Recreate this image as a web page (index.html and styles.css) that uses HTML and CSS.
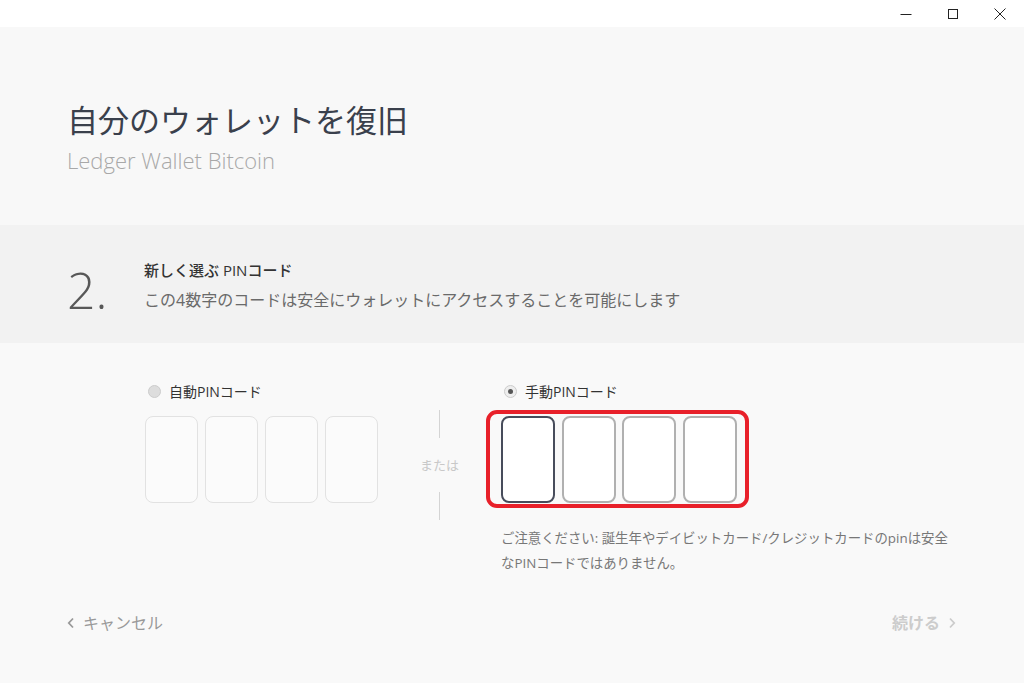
FILE: index.html
```html
<!DOCTYPE html>
<html lang="ja">
<head>
    <meta charset="UTF-8">
    <meta name="viewport" content="width=device-width, initial-scale=1.0">
    <title>Ledger Wallet Bitcoin</title>
    <link rel="stylesheet" href="styles.css">
</head>
<body>
    <div class="window">
        <div class="titlebar">
            <span class="win-btn">
                <svg width="12" height="12" viewBox="0 0 12 12"><path d="M0.5 6.5H11.5" stroke="#222" stroke-width="1" fill="none"/></svg>
            </span>
            <span class="win-btn">
                <svg width="12" height="12" viewBox="0 0 12 12"><rect x="1.5" y="1.5" width="9" height="9" stroke="#222" stroke-width="1" fill="none"/></svg>
            </span>
            <span class="win-btn">
                <svg width="12" height="12" viewBox="0 0 12 12"><path d="M0.5 0.5L11.5 11.5M11.5 0.5L0.5 11.5" stroke="#222" stroke-width="1" fill="none"/></svg>
            </span>
        </div>

        <div class="header">
            <h1 class="title">自分のウォレットを復旧</h1>
            <div class="subtitle">Ledger Wallet Bitcoin</div>
        </div>

        <div class="step">
            <div class="step-number">2.</div>
            <div class="step-text">
                <div class="step-title">新しく選ぶ PINコード</div>
                <div class="step-desc">この4数字のコードは安全にウォレットにアクセスすることを可能にします</div>
            </div>
        </div>

        <div class="main">
            <div class="choices">
                <div class="choice">
                    <label class="radio-label"><span class="radio"></span>自動PINコード</label>
                    <div class="pin-row auto">
                        <div class="pin-box"></div>
                        <div class="pin-box"></div>
                        <div class="pin-box"></div>
                        <div class="pin-box"></div>
                    </div>
                </div>

                <div class="divider">
                    <span class="divider-line"></span>
                    <span class="divider-text">または</span>
                    <span class="divider-line"></span>
                </div>

                <div class="choice">
                    <label class="radio-label"><span class="radio checked"></span>手動PINコード</label>
                    <div class="pin-row manual">
                        <div class="pin-box active"></div>
                        <div class="pin-box"></div>
                        <div class="pin-box"></div>
                        <div class="pin-box"></div>
                    </div>
                    <p class="note">ご注意ください: 誕生年やデイビットカード/クレジットカードのpinは安全<br>なPINコードではありません。</p>
                </div>
            </div>

            <div class="footer">
                <span class="cancel">
                    <svg class="chev" width="8" height="12" viewBox="0 0 8 12"><path d="M6 1.5L1.8 6L6 10.5" stroke="#999" stroke-width="1.8" fill="none"/></svg>
                    キャンセル
                </span>
                <span class="next">
                    続ける
                    <svg class="chev" width="8" height="12" viewBox="0 0 8 12"><path d="M2 1.5L6.2 6L2 10.5" stroke="#ccc" stroke-width="1.8" fill="none"/></svg>
                </span>
            </div>
        </div>
    </div>
</body>
</html>
```

FILE: styles.css
```css
body {
    margin: 0;
    padding: 0;
    font-family: "Open Sans", "Noto Sans CJK JP", sans-serif;
    background-color: #f9f9f9;
    color: #333;
}
.window {
    width: 1024px;
    height: 683px;
    display: flex;
    flex-direction: column;
    overflow: hidden;
}
.titlebar {
    height: 27px;
    background-color: #fff;
    display: flex;
    justify-content: flex-end;
    padding-right: 1px;
}
.win-btn {
    width: 47px;
    display: flex;
    align-items: center;
    justify-content: center;
}
.header {
    height: 198px;
    box-sizing: border-box;
    background-color: #f8f8f8;
    padding: 71px 67px 0;
}
.title {
    margin: 0;
    font-size: 31px;
    font-weight: 400;
    line-height: 44px;
    color: #3a404c;
}
.subtitle {
    margin-top: 3px;
    font-size: 22px;
    font-weight: 300;
    line-height: 30px;
    color: #a8a8a8;
}
.step {
    height: 118px;
    background-color: #f2f2f2;
    display: flex;
    align-items: center;
    padding-left: 67px;
}
.step-number {
    width: 77px;
    font-size: 50px;
    font-weight: 300;
    color: #585858;
    line-height: 50px;
    margin-top: 12px;
}
.step-text {
    margin-top: 2px;
}
.step-title {
    font-size: 15px;
    font-weight: 500;
    color: #333;
    line-height: 24px;
}
.step-desc {
    margin-top: 6px;
    font-size: 16px;
    color: #6a6a6a;
    line-height: 24px;
}
.main {
    flex: 1;
    display: flex;
    flex-direction: column;
    background-color: #f9f9f9;
}
.choices {
    display: flex;
    align-items: flex-start;
    padding: 38px 0 0 145px;
}
.choice {
    display: flex;
    flex-direction: column;
    align-items: flex-start;
}
.radio-label {
    display: flex;
    align-items: center;
    height: 20px;
    font-size: 14px;
    color: #333;
    padding-left: 3px;
}
.radio {
    width: 11px;
    height: 11px;
    border-radius: 50%;
    background-color: #ddd;
    border: 1px solid #ccc;
    margin-right: 8px;
    position: relative;
}
.radio.checked {
    background-color: #eee;
}
.radio.checked::after {
    content: "";
    position: absolute;
    left: 3px;
    top: 3px;
    width: 5px;
    height: 5px;
    border-radius: 50%;
    background-color: #555;
}
.pin-row {
    display: flex;
    margin-top: 15px;
}
.auto {
    gap: 7px;
}
.pin-box {
    height: 85px;
    border-radius: 8px;
}
.auto .pin-box {
    width: 51px;
    border: 1px solid #e2e2e2;
    background-color: #fbfbfb;
}
.manual {
    position: relative;
    gap: 6.5px;
}
.manual .pin-box {
    width: 50px;
    height: 83px;
    border: 2px solid #b0b0b0;
    background-color: #fff;
}
.manual .pin-box.active {
    border-color: #474c5b;
}
.manual::after {
    content: "";
    position: absolute;
    left: -15px;
    right: -12px;
    top: -6px;
    bottom: -5px;
    border: 4px solid #e8202a;
    border-radius: 11px;
}
.divider {
    width: 123px;
    display: flex;
    flex-direction: column;
    align-items: center;
    margin-top: 29px;
}
.divider-line {
    width: 1px;
    height: 28px;
    background-color: #d4d4d4;
}
.divider-text {
    font-size: 13px;
    color: #c8c8c8;
    line-height: 54px;
}
.note {
    margin: 23px 0 0;
    font-size: 13.4px;
    line-height: 25px;
    color: #777;
    white-space: nowrap;
}
.footer {
    margin-top: auto;
    display: flex;
    justify-content: space-between;
    padding: 0 68px 50px 67px;
    font-size: 16px;
    line-height: 20px;
}
.cancel, .next {
    display: flex;
    align-items: center;
    gap: 8px;
}
.cancel {
    color: #999;
}
.next {
    color: #ccc;
    font-weight: 700;
}
```
